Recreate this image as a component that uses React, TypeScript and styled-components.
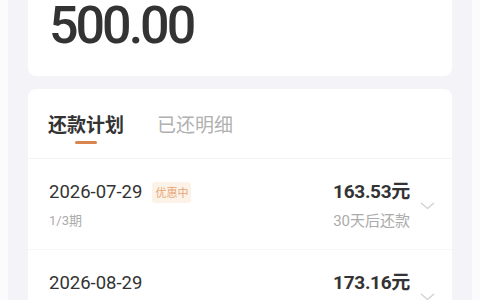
import React from "react";
import styled, { createGlobalStyle } from "styled-components";

const Global = createGlobalStyle`
  html, body { margin: 0; padding: 0; background: #fbfbfd; }
  body { font-family: Roboto, "Noto Sans CJK SC", sans-serif; color: #333; }
  * { box-sizing: border-box; }
`;

const Page = styled.div`
  margin: 0 8px;
  min-height: 300px;
  background: #f3f3f8;
  padding: 0 20px 20px;
  display: flex;
  flex-direction: column;
  gap: 13px;
`;

const AmountCard = styled.div`
  background: #fff;
  border-radius: 0 0 8px 8px;
  padding: 0 20px 24px 21px;
`;

const BigAmount = styled.div`
  font-family: Roboto, sans-serif;
  font-size: 52px;
  line-height: 52px;
  font-weight: 500;
  letter-spacing: -3px;
  color: #333;
`;

const PlanCard = styled.div`
  background: #fff;
  border-radius: 8px;
  overflow: hidden;
`;

const Tabs = styled.div`
  display: flex;
  gap: 33px;
  padding: 22px 20px 14px;
  border-bottom: 1px solid #f4f4f6;
`;

const Tab = styled.div<{ $active?: boolean }>`
  display: flex;
  flex-direction: column;
  align-items: center;
  font-family: "Noto Sans CJK SC", sans-serif;
  font-size: 19px;
  line-height: 26px;
  font-weight: ${(p) => (p.$active ? 700 : 400)};
  color: ${(p) => (p.$active ? "#333" : "#b0b0b0")};
`;

const Underline = styled.div<{ $active?: boolean }>`
  margin-top: 4px;
  width: 22px;
  height: 3px;
  border-radius: 2px;
  background: ${(p) => (p.$active ? "#d8864e" : "transparent")};
`;

const Row = styled.div`
  display: flex;
  align-items: center;
  padding: 21px 17px 18px 21px;
  border-bottom: 1px solid #f7f7f8;
`;

const Left = styled.div`
  flex: 1;
  display: flex;
  flex-direction: column;
`;

const Right = styled.div`
  display: flex;
  flex-direction: column;
  align-items: flex-end;
`;

const DateLine = styled.div`
  display: flex;
  align-items: center;
  height: 24px;
`;

const DateText = styled.span`
  font-family: Roboto, sans-serif;
  font-size: 18.5px;
  line-height: 24px;
  color: #333;
`;

const Badge = styled.span`
  margin-left: 10px;
  padding: 0 3px;
  height: 21px;
  line-height: 21px;
  border-radius: 3px;
  background: #fdf2e8;
  color: #e5a676;
  font-family: "Noto Sans CJK SC", sans-serif;
  font-size: 11px;
`;

const SubText = styled.div<{ $size: number }>`
  margin-top: 7px;
  font-family: Roboto, "Noto Sans CJK SC", sans-serif;
  font-size: ${(p) => p.$size}px;
  line-height: 20px;
  color: #ababab;
`;

const Money = styled.div`
  font-family: Roboto, "Noto Sans CJK SC", sans-serif;
  font-size: 19px;
  line-height: 24px;
  font-weight: 700;
  color: #333;
  letter-spacing: -0.3px;
`;

const Chevron = styled.svg`
  margin-left: 10px;
  flex: none;
`;

type Item = { date: string; badge?: string; period?: string; amount: string; note?: string };

const items: Item[] = [
  { date: "2026-07-29", badge: "优惠中", period: "1/3期", amount: "163.53元", note: "30天后还款" },
  { date: "2026-08-29", period: "2/3期", amount: "173.16元", note: "61天后还款" },
];

export default function App() {
  return (
    <>
      <Global />
      <Page>
        <AmountCard>
          <BigAmount>500.00</BigAmount>
        </AmountCard>
        <PlanCard>
          <Tabs>
            <Tab $active>
              还款计划
              <Underline $active />
            </Tab>
            <Tab>
              已还明细
              <Underline />
            </Tab>
          </Tabs>
          {items.map((it) => (
            <Row key={it.date}>
              <Left>
                <DateLine>
                  <DateText>{it.date}</DateText>
                  {it.badge && <Badge>{it.badge}</Badge>}
                </DateLine>
                <SubText $size={13}>{it.period}</SubText>
              </Left>
              <Right>
                <Money>{it.amount}</Money>
                <SubText $size={15}>{it.note}</SubText>
              </Right>
              <Chevron width="15" height="8" viewBox="0 0 15 8">
                <polyline points="1,1 7.5,6.5 14,1" fill="none" stroke="#cfcfcf" strokeWidth="1.2" />
              </Chevron>
            </Row>
          ))}
        </PlanCard>
      </Page>
    </>
  );
}
